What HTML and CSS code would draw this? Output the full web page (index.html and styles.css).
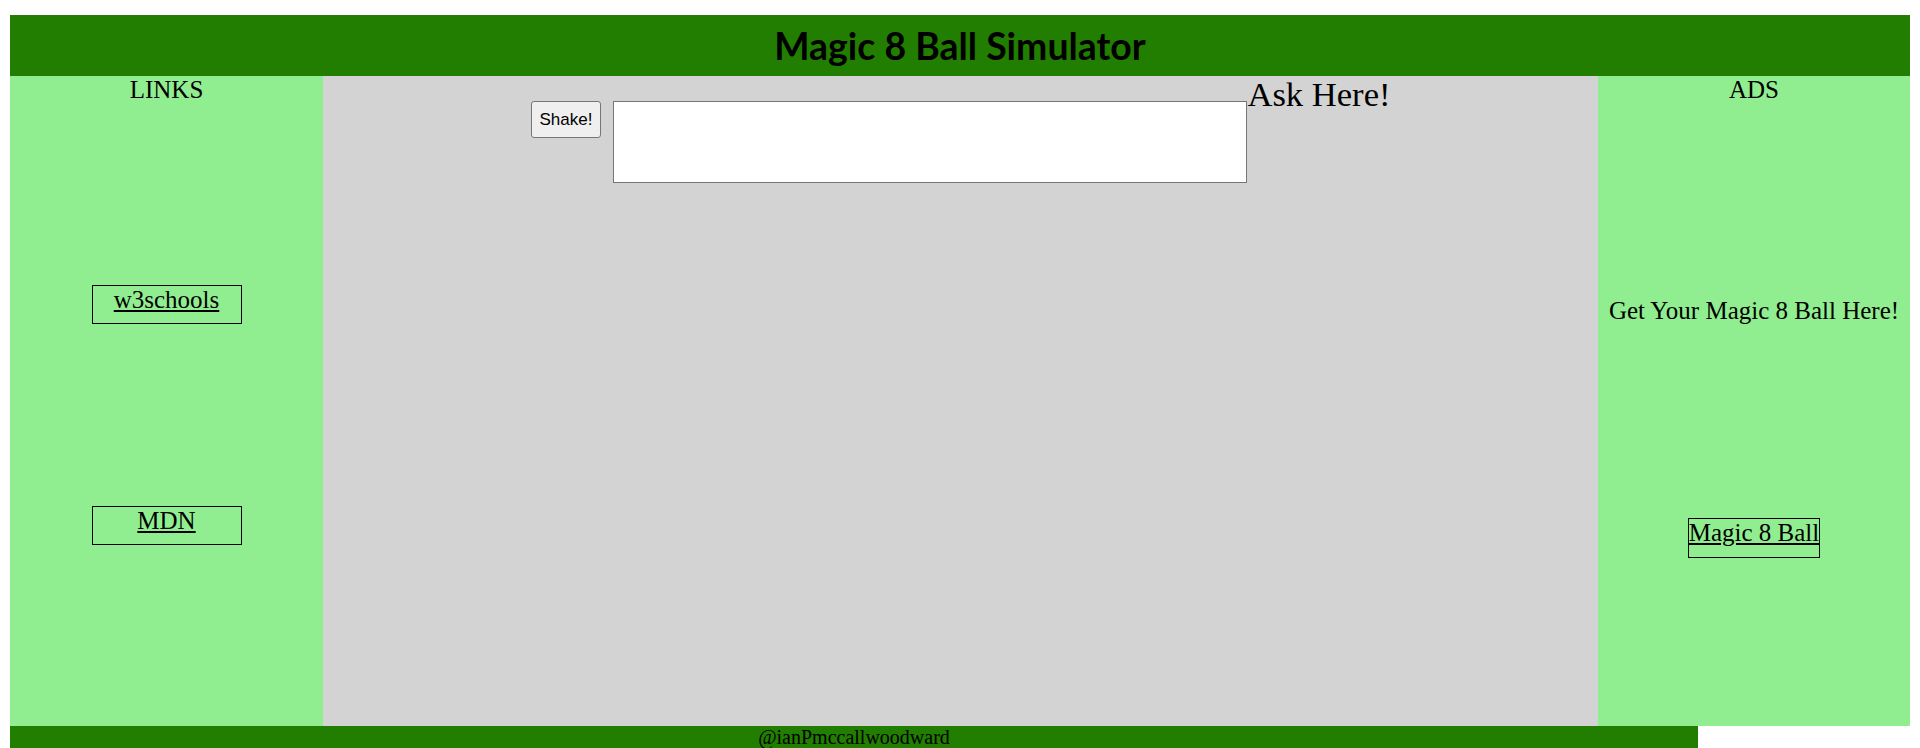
FILE: index.html
```html
<!DOCTYPE html>
<html lang="en">
<head>
<meta charset="utf-8">
<title>Magic 8 Ball Simulator</title>
<link rel="stylesheet" href="styles.css">
</head>
<body>
<header class="site-header">
  <h1 class="title">Magic 8 Ball Simulator</h1>
</header>
<main class="layout">
  <aside class="sidebar">
    <h2 class="side-heading">LINKS</h2>
    <div class="side-body">
      <a class="side-link" href="#">w3schools</a>
      <a class="side-link" href="#">MDN</a>
    </div>
  </aside>
  <section class="center">
    <div class="ask-row">
      <button class="shake" type="button">Shake!</button>
      <textarea class="question" id="question"></textarea>
      <label class="ask-label" for="question">Ask Here!</label>
    </div>
  </section>
  <aside class="sidebar">
    <h2 class="side-heading">ADS</h2>
    <div class="side-body">
      <p class="ad-text">Get Your Magic 8 Ball Here!</p>
      <a class="ad-link" href="#">Magic 8 Ball</a>
    </div>
  </aside>
</main>
<footer class="site-footer">
  <span class="credit">@ianPmccallwoodward</span>
</footer>
</body>
</html>
```
FILE: styles.css
```css
html, body {
  background: #ffffff;
}

body {
  margin: 15px 10px 0 10px;
  font-family: "Liberation Serif", "Times New Roman", serif;
  color: #000;
}

.site-header {
  background: #217e00;
  height: 61px;
  box-sizing: border-box;
  padding-top: 1px;
  text-align: center;
}

.title {
  margin: 0;
  font-family: Lato, "Liberation Sans", sans-serif;
  font-weight: 700;
  font-size: 37.4px;
  line-height: 59px;
  color: #000;
}

.layout {
  display: grid;
  grid-template-columns: 313px 1fr 312px;
  height: 650px;
}

.sidebar {
  background: #90ee90;
  display: flex;
  flex-direction: column;
  text-align: center;
}

.side-heading {
  margin: 0;
  font-size: 25px;
  font-weight: 400;
  line-height: normal;
}

.side-body {
  flex: 1;
  display: flex;
  flex-direction: column;
  align-items: center;
  justify-content: space-evenly;
}

.side-link {
  display: block;
  box-sizing: border-box;
  width: 150px;
  height: 39px;
  border: 1px solid #000;
  color: #000;
  font-size: 25px;
  line-height: normal;
}

.ad-text {
  margin: 25px 0;
  font-size: 25px;
  line-height: normal;
}

.ad-link {
  display: inline-block;
  box-sizing: border-box;
  height: 40px;
  border: 1px solid #000;
  color: #000;
  font-size: 25px;
  line-height: normal;
}

.center {
  background: #d3d3d3;
}

.ask-row {
  display: flex;
  justify-content: center;
  align-items: flex-start;
}

.shake {
  margin-top: 25px;
  box-sizing: border-box;
  height: 37px;
  padding: 0 8px;
  font-family: "Liberation Sans", Arial, sans-serif;
  font-size: 17px;
  color: #000;
  background: #efefef;
  border: 1px solid #767676;
  border-radius: 3px;
}

.question {
  margin: 25px 0 0 12px;
  box-sizing: border-box;
  width: 634px;
  height: 82px;
  padding: 2px;
  border: 1px solid #767676;
  background: #fff;
  resize: none;
}

.ask-label {
  font-size: 34.6px;
  line-height: normal;
  margin-top: -1px;
}

.site-footer {
  background: #217e00;
  width: 1688px;
  height: 24px;
  text-align: center;
  font-size: 20px;
  line-height: normal;
}
```
